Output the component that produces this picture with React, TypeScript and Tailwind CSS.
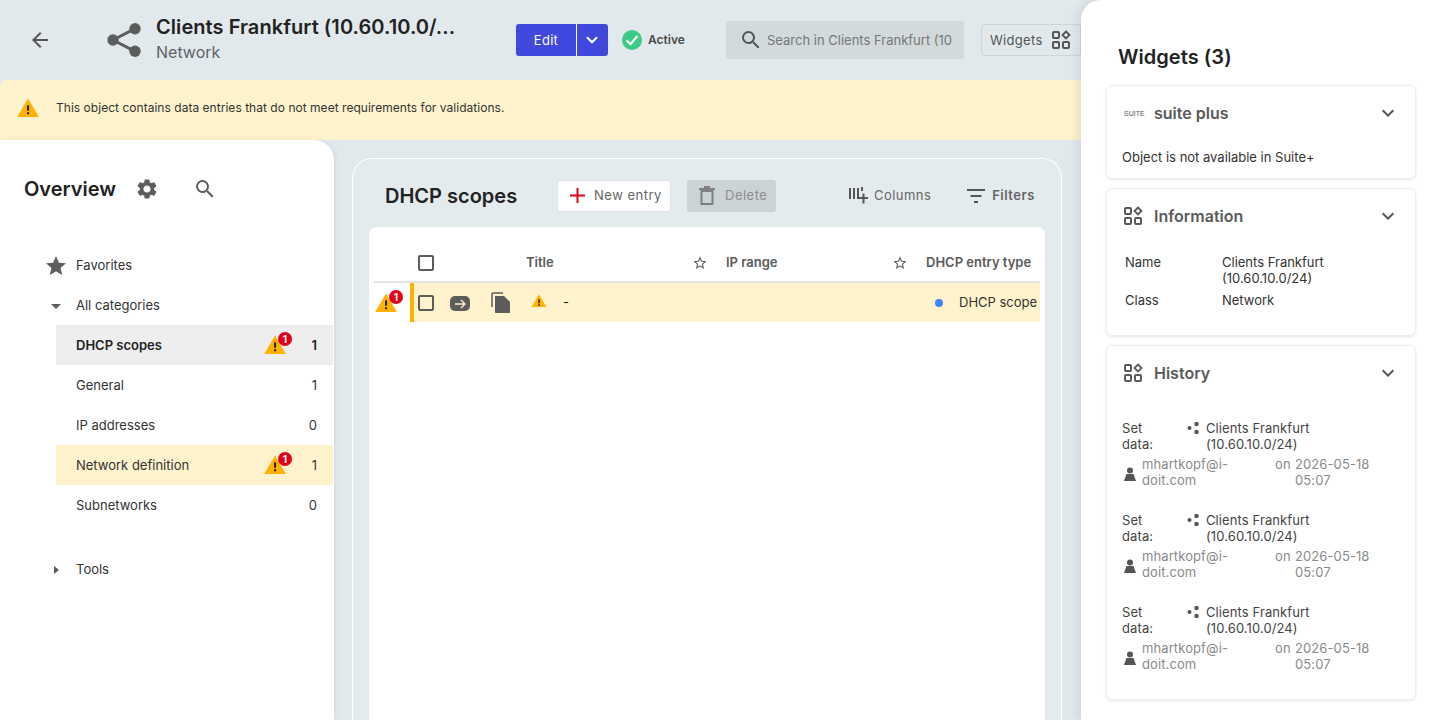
/**
 * Object detail view with category sidebar, DHCP scope list and widgets drawer
 */

import React from 'react';
import { ChevronDown } from 'lucide-react';
import { MdArrowBack, MdExpandMore, MdSearch, MdSettings, MdStar, MdStarBorder } from 'react-icons/md';

const ShareIcon = ({ className = '' }: { className?: string }) => (
  <svg width="34" height="34" viewBox="0 0 34 34" className={className} fill="currentColor">
    <circle cx="28" cy="5.700" r="5.700" />
    <circle cx="28" cy="28.300" r="5.700" />
    <circle cx="6" cy="17" r="5.700" />
    <path d="M6 17 28 5.700M6 17l22 11.300" stroke="currentColor" strokeWidth="3" fill="none" />
  </svg>
);

const WidgetsIcon = ({ className = '' }: { className?: string }) => (
  <svg width="20" height="20" viewBox="0 0 20 20" fill="none" stroke="currentColor" strokeWidth="2" className={`shrink-0 ${className}`}>
    <rect x="2" y="2" width="6" height="6" rx="1" />
    <rect x="2" y="12" width="6" height="6" rx="1" />
    <rect x="12" y="12" width="6" height="6" rx="1" />
    <path d="M15 1.500 18.500 5 15 8.500 11.500 5Z" strokeWidth="1.800" />
  </svg>
);

const WarnIcon = ({ size = 24 }: { size?: number }) => (
  <svg width={size} height={size * 0.87} viewBox="0 0 24 21">
    <path d="M12 .5 24 21H0Z" fill="#ffb300" />
    <rect x="11" y="8" width="2.200" height="6" fill="#222" />
    <rect x="11" y="15.500" width="2.200" height="2.400" fill="#222" />
  </svg>
);

const WarnBadge = () => (
  <span className="relative inline-flex h-[20px] w-[24px] items-start">
    <WarnIcon size={22} />
    <span className="absolute -right-[4px] -top-[3px] flex h-[14px] w-[14px] items-center justify-center rounded-full bg-[#e2001a] text-[10px] font-bold leading-none text-white">
      1
    </span>
  </span>
);

const categories = [
  { label: 'DHCP scopes', count: 1, warn: true, rowClass: 'bg-[#eeeeee] font-semibold text-[#222]' },
  { label: 'General', count: 1, warn: false, rowClass: 'text-[#333]' },
  { label: 'IP addresses', count: 0, warn: false, rowClass: 'text-[#333]' },
  { label: 'Network definition', count: 1, warn: true, rowClass: 'bg-[#fff3cd] text-[#333]' },
  { label: 'Subnetworks', count: 0, warn: false, rowClass: 'text-[#333]' },
];

const HistoryEntry = () => (
  <div className="mb-[24px] text-[13px] leading-[16px] tracking-[0.1px]">
    <div className="flex text-[#444]">
      <span className="w-[65px] shrink-0">Set<br />data:</span>
      <span className="flex w-[19px] shrink-0 pt-[2px] text-[#555]">
        <svg width="14" height="12" viewBox="0 0 14 12" fill="currentColor">
          <circle cx="2.500" cy="6" r="2" />
          <circle cx="9.500" cy="2" r="2.200" />
          <circle cx="9.500" cy="10" r="2.200" />
        </svg>
      </span>
      <span>Clients Frankfurt<br />(10.60.10.0/24)</span>
    </div>
    <div className="mt-[4px] flex items-center text-[#8a8a8a]">
      <svg width="12" height="14" viewBox="0 0 12 14" fill="#555" className="ml-[2px] mr-[6px] mt-[4px] shrink-0">
        <circle cx="6" cy="3.500" r="3" />
        <path d="M2.500 7h7L12 14H0Z" />
      </svg>
      <span className="w-[133px] shrink-0">mhartkopf@i-<br />doit.com</span>
      <span className="w-[20px] shrink-0 self-start whitespace-nowrap">on</span>
      <span>2026-05-18<br />05:07</span>
    </div>
  </div>
);

export default function App(): React.JSX.Element {
  return (
    <div className="relative h-[720px] w-[1440px] overflow-hidden bg-[#e1e9ec] font-['Inter',sans-serif] text-[#222]">
      {/* Header */}
      <div className="flex h-[80px] items-center">
        <div className="flex w-[80px] justify-center">
          <MdArrowBack size={24} className="text-[#555]" />
        </div>
        <div className="flex w-[76px] justify-start pl-[27px]">
          <ShareIcon className="text-[#5c5c5c]" />
        </div>
        <div className="mb-[2px] w-[360px]">
          <div className="text-[20px] font-semibold leading-[26px] tracking-[0.06px] text-[#222]">Clients Frankfurt (10.60.10.0/...</div>
          <div className="text-[16px] leading-[24px] text-[#5f6368]">Network</div>
        </div>
        <div className="flex h-[32px] w-[92px] items-stretch overflow-hidden rounded-[3px] bg-[#4148de] text-[13px] text-white">
          <span className="flex w-[60px] items-center justify-center pt-[2px] tracking-[0.3px]">Edit</span>
          <span className="flex flex-1 items-center justify-center border-l border-white pr-[1px]">
            <ChevronDown size={18} strokeWidth={2.800} />
          </span>
        </div>
        <div className="ml-[14px] flex w-[104px] items-center gap-[6px]">
          <span className="flex h-[20px] w-[20px] items-center justify-center rounded-full bg-[#3ccb85]">
            <svg width="14" height="12" viewBox="0 0 14 12" fill="none" stroke="#fff" strokeWidth="2.200">
              <path d="M1.500 6.500 5.500 10 12.500 2" />
            </svg>
          </span>
          <span className="text-[12px] font-semibold text-[#4a4a4a]">Active</span>
        </div>
        <div className="flex h-[38px] w-[238px] items-center rounded-[3px] bg-[#d2dadc] pl-[13px] text-[13px] text-[#777]">
          <MdSearch size={24} className="mr-[4px] shrink-0 text-[#555]" />
          <span className="overflow-hidden whitespace-nowrap pt-[2px]">Search in Clients Frankfurt (10</span>
        </div>
        <div className="ml-[17px] flex h-[32px] w-[100px] items-center justify-between rounded-[3px] border border-[#cfd6d9] pl-[8px] pr-[9px] text-[13px] tracking-[0.3px] text-[#555]">
          <span className="pt-[2px]">Widgets</span>
          <WidgetsIcon className="text-[#555]" />
        </div>
      </div>

      {/* Validation banner */}
      <div className="flex h-[60px] items-center rounded-t-[6px] bg-[#fff3cd] pb-[5px] pl-[17px] text-[12px] tracking-[0.03px] text-[#333]">
        <WarnIcon size={22} />
        <span className="ml-[17px]">This object contains data entries that do not meet requirements for validations.</span>
      </div>

      {/* Body */}
      <div className="flex h-[580px]">
        <aside className="h-full w-[334px] shrink-0 rounded-tr-[20px] bg-white shadow-[2px_0_6px_rgba(0,0,0,0.06)]">
          <div className="flex h-[105px] items-start pl-[24px] pt-[36px]">
            <span className="text-[20px] font-semibold leading-[26px]">Overview</span>
            <MdSettings size={24} className="ml-[19px] mt-[1px] text-[#5c5c5c]" />
            <MdSearch size={24} className="ml-[34px] mt-[1px] text-[#5c5c5c]" />
          </div>
          <div className="text-[13px]">
            <div className="flex h-[40px] items-center pt-[2px] text-[#333]">
              <span className="flex w-[76px] justify-end pr-[8px]">
                <MdStar size={24} className="text-[#5c5c5c]" />
              </span>
              Favorites
            </div>
            <div className="flex h-[40px] items-center pt-[2px] text-[#333]">
              <span className="flex w-[76px] justify-end pr-[15px]">
                <span className="h-0 w-0 border-x-[5px] border-t-[5px] border-x-transparent border-t-[#5c5c5c]" />
              </span>
              All categories
            </div>
            {categories.map(cat => (
              <div key={cat.label} className={`ml-[56px] mr-[1px] flex h-[40px] items-center pl-[20px] pr-[16px] pt-[2px] ${cat.rowClass}`}>
                <span className="flex-1">{cat.label}</span>
                {cat.warn && (
                  <span className="-mt-[2px] flex">
                    <WarnBadge />
                  </span>
                )}
                <span className="w-[29px] text-right">{cat.count}</span>
              </div>
            ))}
            <div className="mt-[24px] flex h-[40px] items-center pt-[2px] text-[#333]">
              <span className="flex w-[76px] justify-end pr-[17px]">
                <span className="h-0 w-0 border-y-[4.500px] border-l-[5px] border-y-transparent border-l-[#5c5c5c]" />
              </span>
              Tools
            </div>
          </div>
        </aside>

        {/* List panel */}
        <main className="ml-[18px] mt-[18px] flex h-[600px] w-[710px] shrink-0 flex-col rounded-t-[20px] border border-b-0 border-white bg-[#e4ebed] px-[16px]">
          <div className="flex h-[68px] shrink-0 items-center pl-[16px] pt-[5px]">
            <span className="w-[172px] text-[20px] font-semibold text-[#222]">DHCP scopes</span>
            <span className="flex h-[32px] w-[114px] items-center rounded-[3px] border border-[#dfe5e7] bg-white pl-[12px] text-[13px] tracking-[0.5px] text-[#666]">
              <svg width="15" height="15" viewBox="0 0 15 15" stroke="#e2001a" strokeWidth="2" className="mr-[9px]">
                <path d="M7.500 0v15M0 7.500h15" />
              </svg>
              New entry
            </span>
            <span className="ml-[16px] flex h-[32px] w-[89px] items-center rounded-[3px] bg-[#cbd3d5] pl-[12px] text-[13px] tracking-[0.5px] text-[#8c8c8c]">
              <svg width="16" height="19" viewBox="0 0 16 19" fill="none" stroke="#808080" strokeWidth="2" className="mr-[10px]">
                <path d="M0 3h16M5 1h6" />
                <rect x="2.500" y="5" width="11" height="13" />
              </svg>
              Delete
            </span>
            <span className="ml-[73px] flex items-center text-[13px] tracking-[0.45px] text-[#666]">
              <svg width="19" height="17" viewBox="0 0 19 17" fill="none" stroke="#555" strokeWidth="2" className="mr-[6px]">
                <path d="M1 1v11M5 1v11M9 1v11M13 0v4M9.500 11H19M14.500 6.500v10" />
              </svg>
              Columns
            </span>
            <span className="ml-[36px] flex items-center text-[13px] font-semibold tracking-[0.5px] text-[#666]">
              <svg width="18" height="14" viewBox="0 0 18 14" fill="none" stroke="#555" strokeWidth="2" className="mr-[7px]">
                <path d="M0 1h18M3.500 7h11M7 13h4" />
              </svg>
              Filters
            </span>
          </div>

          <div className="flex-1 rounded-t-[8px] bg-white px-[5px] pt-[16px]">
            <div className="flex h-[40px] items-center border-b-2 border-[#e5e5e5] pt-[2px] text-[13px] font-semibold text-[#5a5a5a]">
              <span className="w-[44px] shrink-0" />
              <span className="h-[16px] w-[16px] shrink-0 rounded-[2px] border-2 border-[#5c5c5c]" />
              <span className="ml-[92px] w-[166px] shrink-0">Title</span>
              <MdStarBorder size={16} className="shrink-0 text-[#5c5c5c]" />
              <span className="ml-[18px] w-[166px] shrink-0">IP range</span>
              <MdStarBorder size={16} className="shrink-0 text-[#5c5c5c]" />
              <span className="ml-[18px] whitespace-nowrap">DHCP entry type</span>
            </div>
            <div className="flex h-[39px] items-center">
              <span className="flex w-[36px] shrink-0 justify-start pl-[1px]">
                <WarnBadge />
              </span>
              <div className="flex h-full flex-1 items-center border-l-[4px] border-[#ffb300] bg-[#fff3cd]">
                <span className="ml-[4px] h-[16px] w-[16px] shrink-0 rounded-[2px] border-2 border-[#5c5c5c]" />
                <span className="ml-[16px] mt-[2px] flex h-[15px] w-[20px] shrink-0 items-center justify-center rounded-[5px] bg-[#5c5c5c]">
                  <svg width="12" height="10" viewBox="0 0 12 10" fill="none" stroke="#fff3cd" strokeWidth="1.300">
                    <path d="M1 5h10M7 1l4 4-4 4" />
                  </svg>
                </span>
                <svg width="19" height="21" viewBox="0 0 19 21" className="ml-[21px] shrink-0">
                  <path d="M1 15V2c0-.6.4-1 1-1h10" fill="none" stroke="#5c5c5c" strokeWidth="1.500" />
                  <path d="M5 4h8l6 6v10c0 .6-.4 1-1 1H5c-.6 0-1-.4-1-1V5c0-.6.4-1 1-1Z" fill="#5c5c5c" />
                </svg>
                <span className="mb-[4px] ml-[21px] flex shrink-0"><WarnIcon size={16} /></span>
                <span className="ml-[16px] w-[372px] shrink-0 text-[13px]">-</span>
                <span className="h-[8px] w-[8px] shrink-0 rounded-full bg-[#3f85f5]" />
                <span className="ml-[16px] whitespace-nowrap text-[13px] text-[#333]">DHCP scope</span>
              </div>
            </div>
          </div>
        </main>
      </div>

      {/* Widgets drawer */}
      <div className="absolute right-0 top-0 h-[720px] w-[359px] rounded-tl-[20px] bg-white pl-[25px] pr-[24px] shadow-[-4px_0_10px_rgba(0,0,0,0.08)]">
        <div className="flex h-[85px] items-start pl-[12px] pt-[44px] text-[20px] font-semibold leading-[26px] tracking-[0.06px]">Widgets (3)</div>

        <section className="h-[94px] rounded-[6px] border border-[#eeeeee] px-[15px] shadow-[0_1px_3px_rgba(0,0,0,0.1)]">
          <div className="flex h-[53px] items-center">
            <span className="mt-[3px] w-[32px] pl-[2px] font-['Liberation_Sans',sans-serif] text-[7px] text-[#555]">SUITE</span>
            <span className="flex-1 text-[16px] font-semibold text-[#5a5a5a]">suite plus</span>
            <MdExpandMore size={24} className="text-[#555]" />
          </div>
          <div className="mt-[10px] text-[13px] leading-[16px] text-[#333]">Object is not available in Suite+</div>
        </section>

        <section className="mt-[9px] h-[148px] rounded-[6px] border border-[#eeeeee] px-[15px] shadow-[0_1px_3px_rgba(0,0,0,0.1)]">
          <div className="flex h-[53px] items-center">
            <WidgetsIcon className="ml-[1px] mr-[11px] text-[#5a5a5a]" />
            <span className="flex-1 text-[16px] font-semibold text-[#5a5a5a]">Information</span>
            <MdExpandMore size={24} className="text-[#555]" />
          </div>
          <div className="mt-[12px] grid grid-cols-[97px_1fr] gap-y-[6px] pl-[3px] text-[13px] leading-[16px] text-[#333]">
            <span>Name</span>
            <span>Clients Frankfurt<br />(10.60.10.0/24)</span>
            <span>Class</span>
            <span>Network</span>
          </div>
        </section>

        <section className="mt-[9px] h-[355px] rounded-[6px] border border-[#eeeeee] px-[15px] shadow-[0_1px_3px_rgba(0,0,0,0.1)]">
          <div className="flex h-[53px] items-center">
            <WidgetsIcon className="ml-[1px] mr-[11px] text-[#5a5a5a]" />
            <span className="flex-1 text-[16px] font-semibold text-[#5a5a5a]">History</span>
            <MdExpandMore size={24} className="text-[#555]" />
          </div>
          <div className="mt-[21px]">
            <HistoryEntry />
            <HistoryEntry />
            <HistoryEntry />
          </div>
        </section>
      </div>
    </div>
  );
}
